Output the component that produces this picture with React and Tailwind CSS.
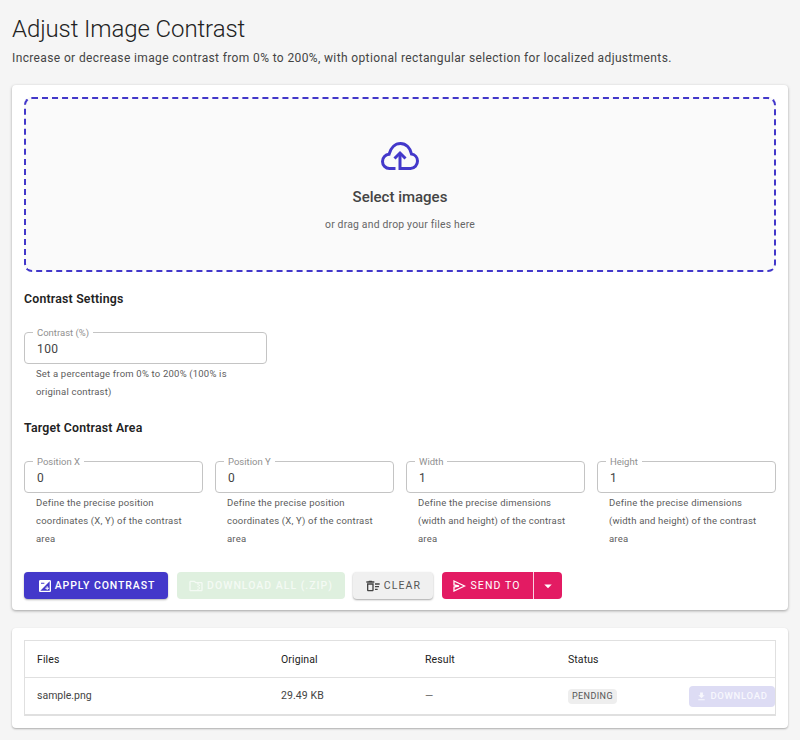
import React from 'react';
import {
	MdExposure,
	MdOutlineFolderZip,
	MdOutlineDeleteSweep,
	MdArrowDropDown,
	MdFileDownload,
} from 'react-icons/md';

const areaFields = [
	{ label: 'Position X', value: '0', help: 'Define the precise position coordinates (X, Y) of the contrast area' },
	{ label: 'Position Y', value: '0', help: 'Define the precise position coordinates (X, Y) of the contrast area' },
	{ label: 'Width', value: '1', help: 'Define the precise dimensions (width and height) of the contrast area' },
	{ label: 'Height', value: '1', help: 'Define the precise dimensions (width and height) of the contrast area' },
];

function UploadCloud() {
	return (
		<svg width="38" height="28" viewBox="0 0 38 28" fill="none" className="mt-[43px] text-[#4338ca]">
			<path
				d="M14.5 26.5H8.5C4.5 26.5 1.5 23.2 1.5 19.5C1.5 15.6 4.5 12.6 8 12.3C9.6 6 14 1.5 19.5 1.5C25 1.5 29.5 6 30.5 12C34 12.5 36.5 15.5 36.5 19C36.5 23 33.5 26.5 29.5 26.5H19"
				stroke="currentColor"
				strokeWidth="3"
			/>
			<path d="M19 28V12" stroke="currentColor" strokeWidth="3" />
			<path d="M13.5 16.5L19 11L24.5 16.5" stroke="currentColor" strokeWidth="3" />
		</svg>
	);
}

function SendIcon() {
	return (
		<svg width="13" height="12" viewBox="0 0 13 12" fill="none">
			<path d="M1 1L11.5 6L1 11V7L6 6L1 5Z" stroke="currentColor" strokeWidth="1.3" strokeLinejoin="miter" />
		</svg>
	);
}

function Field({ label, value, help }) {
	return (
		<div>
			<div className="relative h-[32px] rounded border border-[#c4c4c4] px-3 flex items-center">
				<span className="absolute -top-[6px] left-2 bg-white px-1 text-[9.5px] leading-[12px] text-[#909090]">{label}</span>
				<span className="text-[12px] tracking-[0.4px] text-[#444] pt-[1px]">{value}</span>
			</div>
			<p className="px-3 mt-[1px] text-[9.5px] leading-[18px] tracking-[0.2px] text-[#5c5c5c]">{help}</p>
		</div>
	);
}

export default function App() {
	return (
		<div className="min-h-[740px] bg-[#f5f5f5] px-3 pt-[13px] font-['Roboto',sans-serif] overflow-hidden">
			<h1 className="text-[24px] leading-[32px] font-light tracking-[-0.1px] text-[#222]">Adjust Image Contrast</h1>
			<p className="mt-[2px] text-[12px] leading-[22px] tracking-[0.37px] text-[#444]">
				Increase or decrease image contrast from 0% to 200%, with optional rectangular selection for localized adjustments.
			</p>

			<section className="mt-[16px] h-[525px] bg-white rounded shadow-[0_1px_3px_rgba(0,0,0,0.35)] p-3">
				<div className="h-[175px] rounded-lg border-2 border-dashed border-[#4338ca] bg-[#fafafa] flex flex-col items-center">
					<UploadCloud />
					<div className="mt-[17px] text-[15px] leading-[20px] font-medium text-[#444]">Select images</div>
					<div className="mt-[10px] text-[10.4px] leading-[16px] tracking-[0.2px] text-[#666]">or drag and drop your files here</div>
				</div>

				<h2 className="mt-[18px] text-[12.3px] leading-[18px] font-semibold tracking-[0.2px] text-[#222]">Contrast Settings</h2>
				<div className="mt-[24px] w-[243px]">
					<Field label="Contrast (%)" value="100" help="Set a percentage from 0% to 200% (100% is original contrast)" />
				</div>

				<h2 className="mt-[18px] text-[12.3px] leading-[18px] font-semibold tracking-[0.2px] text-[#222]">Target Contrast Area</h2>
				<div className="mt-[24px] grid grid-cols-4 gap-3">
					{areaFields.map((f) => (
						<Field key={f.label} {...f} />
					))}
				</div>

				<div className="mt-[24px] flex items-center gap-[8.5px] text-[10.5px] font-medium tracking-[0.9px]">
					<button className="h-[27px] w-[144px] rounded bg-[#4338ca] text-white flex items-center justify-center gap-[2px] shadow-[0_1px_2px_rgba(0,0,0,0.3)]">
						<MdExposure size={16} />
						APPLY CONTRAST
					</button>
					<button className="h-[27px] w-[168px] rounded bg-[#dff0df] text-[#f4faf4] tracking-[1px] flex items-center justify-center gap-[3px]">
						<MdOutlineFolderZip size={16} />
						DOWNLOAD ALL (.ZIP)
					</button>
					<button className="h-[27px] w-[80px] rounded bg-[#f0f0f0] text-[#555] font-normal tracking-[1.1px] flex items-center justify-center gap-[3px] shadow-[0_1px_2px_rgba(0,0,0,0.35)]">
						<MdOutlineDeleteSweep size={16} className="text-[#444]" />
						CLEAR
					</button>
					<div className="flex h-[27px] rounded bg-[#e31b63] text-white font-normal tracking-[1.1px]">
						<button className="w-[92px] flex items-center justify-center gap-[4px] border-r border-white/80">
							<SendIcon />
							SEND TO
						</button>
						<button className="w-[28px] flex items-center justify-center">
							<MdArrowDropDown size={18} />
						</button>
					</div>
				</div>
			</section>

			<section className="mt-[18px] h-[100px] bg-white rounded shadow-[0_1px_2px_rgba(0,0,0,0.3)] p-3">
				<div className="h-[76px] border border-[#e0e0e0] border-b-2 text-[10.5px] tracking-[0.1px] text-[#333]">
					<div className="h-[37px] grid grid-cols-[244px_144px_143px_1fr] items-center px-3 pt-[1px] border-b border-[#e0e0e0] text-[#222]">
						<span>Files</span>
						<span>Original</span>
						<span>Result</span>
						<span>Status</span>
					</div>
					<div className="h-[36px] grid grid-cols-[244px_144px_143px_1fr] items-center pl-3 text-[#444]">
						<span className="tracking-normal">sample.png</span>
						<span>29.49 KB</span>
						<span className="text-[#666]">—</span>
						<div className="flex items-center justify-between">
							<span className="h-[15px] px-1 rounded bg-[#eeeeee] text-[9px] leading-[15px] tracking-[0.4px] text-[#555]">PENDING</span>
							<button className="h-[21px] w-[86px] rounded bg-[#dddcf4] text-[#f7f7fd] text-[9.5px] font-medium tracking-[0.7px] flex items-center justify-center gap-[3px]">
								<MdFileDownload size={11} />
								DOWNLOAD
							</button>
						</div>
					</div>
				</div>
			</section>
		</div>
	);
}
